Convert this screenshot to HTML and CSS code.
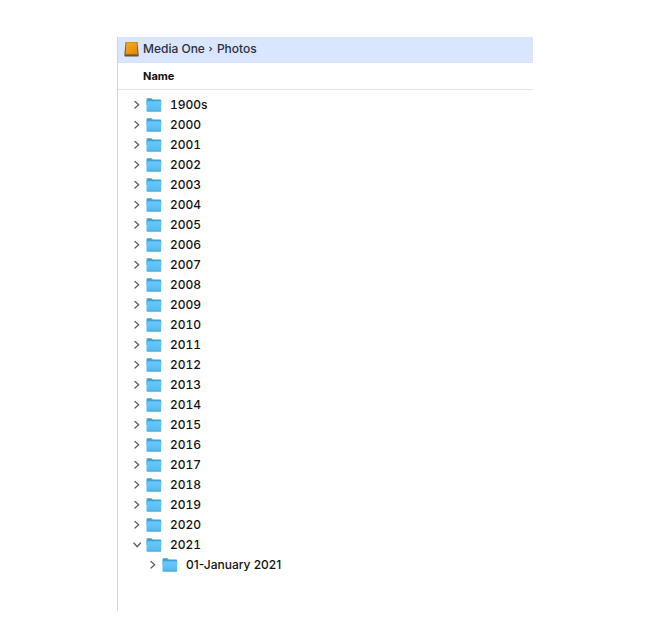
FILE: index.html
```
<!DOCTYPE html>
<html lang="en">
<head>
<meta charset="utf-8">
<meta name="viewport" content="width=device-width, initial-scale=1">
<title>Photos</title>
<link rel="stylesheet" href="styles.css">
</head>
<body>
<svg class="sprite" aria-hidden="true">
  <defs>
    <linearGradient id="front" x1="0" y1="0" x2="0" y2="1">
      <stop offset="0" stop-color="#69c7fa"/>
      <stop offset="1" stop-color="#58b9f2"/>
    </linearGradient>
    <linearGradient id="drive" x1="0" y1="0" x2="1" y2="1">
      <stop offset="0" stop-color="#f8ae22"/>
      <stop offset="1" stop-color="#df8602"/>
    </linearGradient>
  </defs>
  <symbol id="folder" viewBox="0 0 16 16">
    <path d="M.5 2.500Q.5 1.300 1.800 1.300H5Q5.700 1.300 6.200 1.900L6.700 2.500H14Q15.200 2.500 15.200 3.700V8H.5Z" fill="#3f9fd0"/>
    <path d="M.5 4.200H15.200V13.700Q15.200 14.500 14.400 14.500H1.300Q.5 14.500 .5 13.700Z" fill="url(#front)"/>
    <path d="M.7 14.100H15" fill="none" stroke="#439fd2" stroke-width=".8"/>
  </symbol>
  <symbol id="chevron" viewBox="0 0 10 10">
    <path d="M3 1.500L6.700 4.800L3 8.100" fill="none" stroke="#626262" stroke-width="1.400" stroke-linecap="round" stroke-linejoin="round"/>
  </symbol>
</svg>
<main class="browser">
  <nav class="path" aria-label="Path">
    <svg class="drive" viewBox="0 0 16 16" aria-hidden="true">
      <path d="M1.700 1H13.300L14.700 13V14.700Q14.700 15.500 13.900 15.500H1.100Q.4 15.500 .4 14.700V13Z" fill="#69562f"/>
      <path d="M2.400 1.200H12.700L13.700 12.900H1.500Z" fill="url(#drive)"/>
      <path d="M1.300 13.400H13.900" stroke="#a4762f" stroke-width=".8"/>
    </svg>
    <a href="#">Media One</a>
    <svg class="separator" viewBox="0 0 6 6" aria-hidden="true"><path d="M1.500 .8L3.700 3L1.500 5.200" fill="none" stroke="#444" stroke-width="1.100"/></svg>
    <a href="#">Photos</a>
  </nav>
  <h1 class="column">Name</h1>
  <ul class="tree" id="tree"></ul>
</main>
<script src="tree.js"></script>
</body>
</html>
```
FILE: styles.css
```
* {
  box-sizing: border-box;
}

body {
  margin: 0;
  padding: 37px 114px 33px 117px;
  min-height: 100vh;
  display: flex;
  background: #fff;
  color: #111;
  font: 500 12px/20px Inter, "Liberation Sans", sans-serif;
}

.sprite {
  position: absolute;
  width: 0;
  height: 0;
}

.browser {
  flex: 1;
  min-width: 0;
  border-left: 1px solid #d4d4d4;
}

.path {
  display: flex;
  align-items: center;
  gap: 3px;
  padding: 2px 6px 3px;
  height: 26px;
  background: #dae5fe;
  border-bottom: 1px solid #d9dff5;
}

.path a {
  color: #2b303c;
  text-decoration: none;
}

.drive {
  width: 16px;
  height: 16px;
}

.separator {
  width: 6px;
  height: 6px;
}

.column {
  margin: 0;
  padding: 3px 25px;
  border-bottom: 1px solid #e4e4e4;
  font-size: 11px;
  font-weight: 700;
}

.tree,
.tree ul {
  margin: 0;
  padding: 0;
  list-style: none;
}

.tree {
  padding: 5px 14px;
  font-variant-numeric: tabular-nums;
}

.tree ul {
  padding-left: 16px;
  font-variant-numeric: normal;
}

.row {
  display: flex;
  align-items: center;
  height: 20px;
}

.toggle {
  display: flex;
  margin: 0 4px 0 0;
  padding: 0;
  border: 0;
  background: none;
}

.toggle svg {
  width: 10px;
  height: 10px;
}

.toggle[aria-expanded="true"] svg {
  transform: rotate(90deg);
}

.folder {
  width: 16px;
  height: 16px;
  margin-right: 8px;
}
```
FILE: tree.js
```
const names = ["1900s"];
for (let year = 2000; year <= 2021; year++) names.push(String(year));

const children = { "2021": ["01-January 2021"] };

function build(list, items) {
  for (const name of items) {
    const item = document.createElement("li");
    const nested = children[name];
    item.innerHTML = `<div class="row">
      <button class="toggle" type="button" aria-label="${name}" aria-expanded="${Boolean(nested)}"><svg aria-hidden="true"><use href="#chevron"/></svg></button>
      <svg class="folder" aria-hidden="true"><use href="#folder"/></svg>
      <span>${name}</span>
    </div>`;
    if (nested) {
      const sub = document.createElement("ul");
      build(sub, nested);
      item.append(sub);
    }
    list.append(item);
  }
}

build(document.getElementById("tree"), names);
```
